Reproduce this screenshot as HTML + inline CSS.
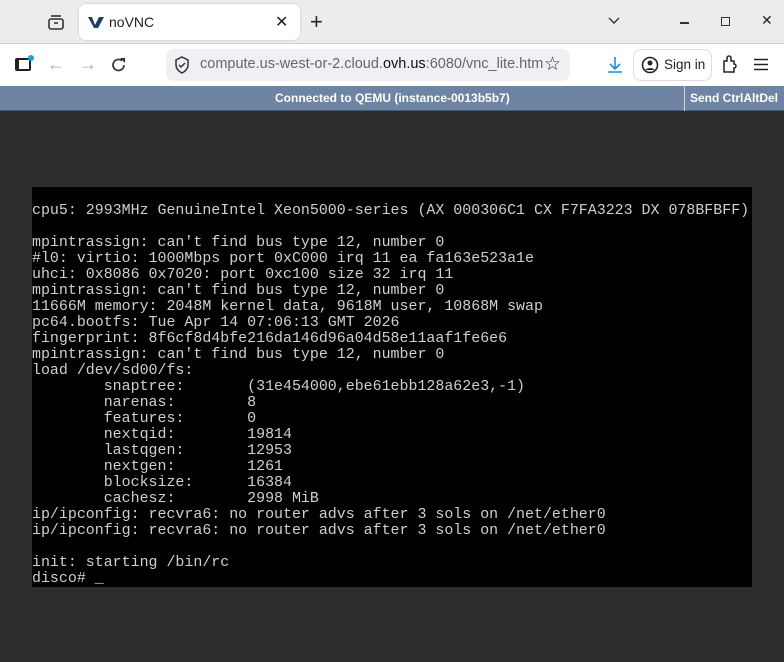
<!DOCTYPE html>
<html><head><meta charset="utf-8"><style>
*{margin:0;padding:0;box-sizing:border-box}
body{width:784px;height:662px;overflow:hidden;background:#2d2d2d;font-family:"Liberation Sans",sans-serif;position:relative}
.tabs{position:absolute;left:0;top:0;width:784px;height:44px;background:#ececec;border-bottom:1px solid #d0d0d0}
.tab{position:absolute;left:79px;top:4px;width:221px;height:36px;background:#fff;border-radius:7px;box-shadow:0 0 2px rgba(0,0,0,.2)}
.nav{position:absolute;left:0;top:44px;width:784px;height:42px;background:#fff}
.url{position:absolute;left:166px;top:49px;width:404px;height:32px;background:#f0f0f4;border-radius:8px}
.bar{position:absolute;left:0;top:86px;width:784px;height:25px;background:#6e84a3;border-bottom:1px solid #4a5a70;color:#fff;font-weight:bold;font-size:12px}
.term{position:absolute;left:32px;top:187px;width:720px;height:400px;background:#000}
pre{position:absolute;left:32px;top:203px;font-family:"Liberation Mono",monospace;font-size:14.95px;line-height:16px;color:#cfcfcf;letter-spacing:0}
.t{position:absolute;font-size:14px;color:#222}
</style></head><body>
<div class="tabs">
 <svg style="position:absolute;left:47px;top:14px" width="18" height="16" viewBox="0 0 18 16"><rect x="2" y="5" width="14" height="10" rx="2" fill="none" stroke="#333" stroke-width="1.6"/><line x1="4" y1="2" x2="14" y2="2" stroke="#333" stroke-width="1.6"/><line x1="7" y1="9" x2="11" y2="9" stroke="#333" stroke-width="1.6"/></svg>
 <div class="tab">
  <svg style="position:absolute;left:8px;top:11px" width="18" height="14" viewBox="0 0 18 14"><path d="M1 2h4l3 8 4-8h5l-6 11H7z" fill="#1f3b73"/></svg>
  <span class="t" style="left:30px;top:10px">noVNC</span>
  <span class="t" style="left:196px;top:8px;font-size:16px">✕</span>
 </div>
 <span class="t" style="left:310px;top:9px;font-size:22px;font-weight:300">+</span>
 <svg style="position:absolute;left:607px;top:16px" width="14" height="10"><path d="M2 2l5 5 5-5" fill="none" stroke="#333" stroke-width="1.4"/></svg>
 <div style="position:absolute;left:680px;top:22px;width:9px;height:1.5px;background:#333"></div>
 <div style="position:absolute;left:721px;top:17px;width:9px;height:9px;border:1.4px solid #333"></div>
 <span class="t" style="left:761px;top:12px;font-size:14px">✕</span>
</div>
<div class="nav">
 <div style="position:absolute;left:15px;top:14px;width:16px;height:13px;border:2px solid #222;border-left-width:4px;border-radius:2px"></div>
 <div style="position:absolute;left:28px;top:11px;width:6px;height:6px;border-radius:50%;background:#1a9cf0"></div>
 <span class="t" style="left:47px;top:10px;font-size:18px;color:#aaa">←</span>
 <span class="t" style="left:79px;top:10px;font-size:18px;color:#aaa">→</span>
 <svg style="position:absolute;left:110px;top:12px" width="18" height="18" viewBox="0 0 18 18"><path d="M14 9a5.5 5.5 0 1 1-2-4.3" fill="none" stroke="#333" stroke-width="1.7"/><path d="M10 2h5v5z" fill="#333"/></svg>
</div>
<div class="url">
 <svg style="position:absolute;left:8px;top:7px" width="16" height="18" viewBox="0 0 16 18"><path d="M8 1l6 3v5c0 4-3 6.5-6 8-3-1.5-6-4-6-8V4z" fill="none" stroke="#333" stroke-width="1.5"/><path d="M5 9l2 2 4-4" fill="none" stroke="#333" stroke-width="1.5"/></svg>
 <span class="t" style="left:34px;top:7px;font-size:14.5px;color:#666;white-space:nowrap">compute.us-west-or-2.cloud.<span style="color:#111">ovh.us</span>:6080/vnc_lite.htm</span>
 <span class="t" style="left:378px;top:4px;font-size:19px;color:#333">☆</span>
</div>
<svg style="position:absolute;left:606px;top:55px" width="18" height="20" viewBox="0 0 18 20"><path d="M9 2v11M4 9l5 5 5-5M2 17h14" fill="none" stroke="#1a8fe0" stroke-width="1.6"/></svg>
<div style="position:absolute;left:633px;top:49px;width:79px;height:32px;border:1px solid #ddd;border-radius:8px"></div>
<svg style="position:absolute;left:641px;top:56px" width="18" height="18" viewBox="0 0 18 18"><circle cx="9" cy="9" r="7.5" fill="none" stroke="#222" stroke-width="1.6"/><circle cx="9" cy="7" r="2.5" fill="#222"/><path d="M4.5 14c1-2.5 8-2.5 9 0" fill="#222"/></svg>
<span class="t" style="left:664px;top:57px;font-size:13.5px">Sign in</span>
<svg style="position:absolute;left:722px;top:55px" width="16" height="18" viewBox="0 0 16 18"><path d="M2 6h3V3a2 2 0 0 1 4 0v3h3v3a2 2 0 0 1 0 4v4H2z" fill="none" stroke="#222" stroke-width="1.5"/></svg>
<svg style="position:absolute;left:753px;top:58px" width="16" height="13"><path d="M1 1.5h14M1 6.5h14M1 11.5h14" stroke="#222" stroke-width="1.5"/></svg>
<div class="bar">
 <span style="position:absolute;left:275px;top:5px">Connected to QEMU (instance-0013b5b7)</span>
 <div style="position:absolute;left:684px;top:0;width:1px;height:25px;background:#c8d0dc"></div>
 <span style="position:absolute;left:690px;top:5px">Send CtrlAltDel</span>
</div>
<div class="term"></div>
<pre>cpu5: 2993MHz GenuineIntel Xeon5000-series (AX 000306C1 CX F7FA3223 DX 078BFBFF)

mpintrassign: can't find bus type 12, number 0
#l0: virtio: 1000Mbps port 0xC000 irq 11 ea fa163e523a1e
uhci: 0x8086 0x7020: port 0xc100 size 32 irq 11
mpintrassign: can't find bus type 12, number 0
11666M memory: 2048M kernel data, 9618M user, 10868M swap
pc64.bootfs: Tue Apr 14 07:06:13 GMT 2026
fingerprint: 8f6cf8d4bfe216da146d96a04d58e11aaf1fe6e6
mpintrassign: can't find bus type 12, number 0
load /dev/sd00/fs:
        snaptree:       (31e454000,ebe61ebb128a62e3,-1)
        narenas:        8
        features:       0
        nextqid:        19814
        lastqgen:       12953
        nextgen:        1261
        blocksize:      16384
        cachesz:        2998 MiB
ip/ipconfig: recvra6: no router advs after 3 sols on /net/ether0
ip/ipconfig: recvra6: no router advs after 3 sols on /net/ether0

init: starting /bin/rc
disco# _</pre>
</body></html>
